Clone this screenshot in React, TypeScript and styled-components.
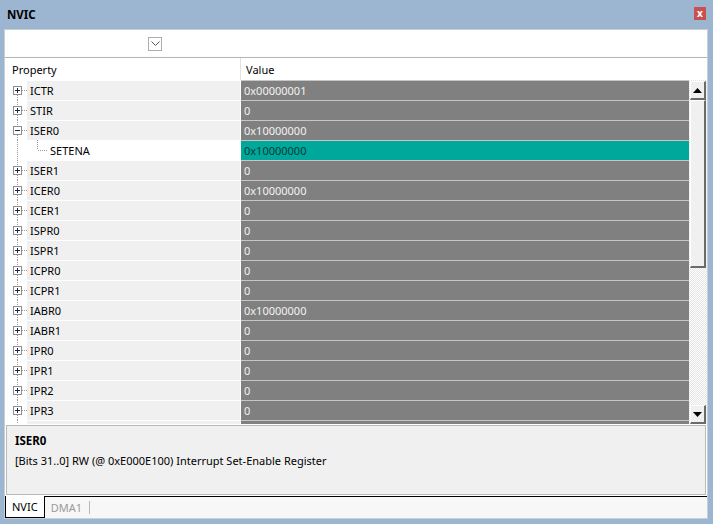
import React from 'react';
import styled, { createGlobalStyle } from 'styled-components';

const GlobalStyle = createGlobalStyle`
  html, body {
    margin: 0;
    padding: 0;
  }
  body {
    font-family: "Noto Sans", "Segoe UI", sans-serif;
    font-size: 11px;
    color: #000;
  }
`;

const Window = styled.div`
  width: 713px;
  height: 524px;
  box-sizing: border-box;
  background: #9cb5d1;
  padding: 0 5px 5px 4px;
  display: flex;
  flex-direction: column;
`;

const TitleBar = styled.div`
  height: 29px;
  flex-shrink: 0;
  display: flex;
  align-items: center;
  justify-content: space-between;
  padding: 0 2px 0 3px;
  font-weight: bold;
  font-size: 11.5px;
`;

const CloseButton = styled.div`
  width: 12px;
  height: 13px;
  background: #c9504f;
  color: #fff;
  font-size: 10px;
  font-weight: bold;
  line-height: 12px;
  text-align: center;
  margin-top: -2px;
`;

const Frame = styled.div`
  flex: 1;
  display: flex;
  flex-direction: column;
  background: #fff;
  border: 1px solid #c9ced4;
  min-height: 0;
`;

const Toolbar = styled.div`
  height: 27px;
  flex-shrink: 0;
  display: flex;
  align-items: center;
  border-bottom: 1px solid #b4b4b4;
`;

const DropButton = styled.div`
  width: 12px;
  height: 12px;
  margin-left: 143px;
  margin-top: 1px;
  border: 1px solid #adadad;
  display: flex;
  align-items: center;
  justify-content: center;
`;

const HeaderRow = styled.div`
  height: 22px;
  flex-shrink: 0;
  display: flex;
  align-items: center;
`;

const HeaderCell = styled.div<{ $width?: number; $divider?: boolean }>`
  ${(p) => (p.$width ? `width: ${p.$width}px;` : 'flex: 1;')}
  height: 100%;
  display: flex;
  align-items: center;
  box-sizing: border-box;
  padding-left: ${(p) => (p.$divider ? 5 : 7)}px;
  ${(p) => p.$divider && 'border-left: 1px solid #e3e3e3;'}
`;

const Grid = styled.div`
  height: 344px;
  flex-shrink: 0;
  display: flex;
`;

const List = styled.div`
  flex: 1;
  overflow: hidden;
`;

const Row = styled.div`
  height: 20px;
  display: flex;
`;

const PropertyCell = styled.div`
  width: 235px;
  height: 20px;
  display: flex;
  background: #fff;
`;

const Label = styled.div<{ $plain?: boolean }>`
  flex: 1;
  margin-top: 1px;
  height: 19px;
  line-height: 19px;
  padding-left: 3px;
  background: ${(p) => (p.$plain ? '#fff' : '#f0f0f0')};
`;

const ValueCell = styled.div<{ $active?: boolean }>`
  flex: 1;
  margin-left: 1px;
  height: 19px;
  line-height: 19px;
  padding-left: 3px;
  border-top: 1px solid #c6c6c6;
  background: ${(p) => (p.$active ? '#00a89b' : '#808080')};
  color: ${(p) => (p.$active ? '#063c37' : '#f2f2f2')};
`;

const Scrollbar = styled.div`
  width: 18px;
  display: flex;
  flex-direction: column;
  box-sizing: border-box;
  padding: 1px 1px 0 1px;
  background-color: #fff;
  background-image: conic-gradient(#ffffff 25%, #e4e4e4 0 50%, #ffffff 0 75%, #e4e4e4 0);
  background-size: 2px 2px;
`;

const ScrollPart = styled.div<{ $height: number }>`
  height: ${(p) => p.$height}px;
  flex-shrink: 0;
  box-sizing: border-box;
  background: #f0f0f0;
  border-top: 1px solid #fff;
  border-left: 1px solid #fff;
  border-right: 2px solid #6b6b6b;
  border-bottom: 2px solid #6b6b6b;
  display: flex;
  align-items: center;
  justify-content: center;
`;

const Track = styled.div`
  flex: 1;
`;

const Details = styled.div`
  height: 70px;
  flex-shrink: 0;
  box-sizing: border-box;
  margin: 1px 1px 0 1px;
  background: #f0f0f0;
  border: 1px solid #b9b9b9;
  padding: 5px 8px;
`;

const DetailTitle = styled.div`
  font-weight: bold;
  font-size: 11.5px;
  line-height: 20px;
`;

const DetailText = styled.div`
  line-height: 20px;
`;

const TabBar = styled.div`
  flex: 1;
  margin-top: 1px;
  display: flex;
  align-items: stretch;
  background: #f7f7f7;
  border-top: 1px solid #000;
`;

const Tab = styled.div<{ $active?: boolean }>`
  display: flex;
  align-items: center;
  padding: 0 6px;
  ${(p) =>
    p.$active
      ? `
    background: #fff;
    margin-top: -1px;
    border-left: 1px solid #000;
    border-right: 1px solid #000;
    border-bottom: 1px solid #000;
    color: #000;
  `
      : `
    color: #9a9a9a;
  `}
`;

const TabDivider = styled.div`
  width: 1px;
  background: #b8b8b8;
  margin: 4px 0 4px 1px;
`;

type Register = {
  name: string;
  value: string;
  expanded?: boolean;
  child?: boolean;
  active?: boolean;
};

const registers: Register[] = [
  { name: 'ICTR', value: '0x00000001' },
  { name: 'STIR', value: '0' },
  { name: 'ISER0', value: '0x10000000', expanded: true },
  { name: 'SETENA', value: '0x10000000', child: true, active: true },
  { name: 'ISER1', value: '0' },
  { name: 'ICER0', value: '0x10000000' },
  { name: 'ICER1', value: '0' },
  { name: 'ISPR0', value: '0' },
  { name: 'ISPR1', value: '0' },
  { name: 'ICPR0', value: '0' },
  { name: 'ICPR1', value: '0' },
  { name: 'IABR0', value: '0x10000000' },
  { name: 'IABR1', value: '0' },
  { name: 'IPR0', value: '0' },
  { name: 'IPR1', value: '0' },
  { name: 'IPR2', value: '0' },
  { name: 'IPR3', value: '0' },
];

const dot = { stroke: '#9a9a9a', strokeWidth: 1, strokeDasharray: '1 1' };

const TreeGutter = ({ reg, first }: { reg?: Register; first: boolean }) => {
  if (reg?.child) {
    return (
      <svg width="42" height="20">
        <line x1="12.5" y1="0" x2="12.5" y2="20" {...dot} />
        <line x1="32.5" y1="0" x2="32.5" y2="10" {...dot} />
        <line x1="33" y1="10.5" x2="43" y2="10.5" {...dot} />
      </svg>
    );
  }
  return (
    <svg width="22" height="20">
      {!first && <line x1="12.5" y1="0" x2="12.5" y2="6" {...dot} />}
      <line x1="12.5" y1="15" x2="12.5" y2="20" {...dot} />
      <line x1="17" y1="10.5" x2="22" y2="10.5" {...dot} />
      <rect x="8.5" y="6.5" width="8" height="8" fill="#fff" stroke="#8e8e8e" />
      <line x1="10" y1="10.5" x2="15" y2="10.5" stroke="#1c2a48" />
      {!reg?.expanded && <line x1="12.5" y1="8" x2="12.5" y2="13" stroke="#1c2a48" />}
    </svg>
  );
};

export default function App() {
  return (
    <>
      <GlobalStyle />
      <Window>
        <TitleBar>
          <span>NVIC</span>
          <CloseButton>x</CloseButton>
        </TitleBar>
        <Frame>
          <Toolbar>
            <DropButton>
              <svg width="9" height="6" viewBox="0 0 9 6">
                <polyline points="0.5,0.5 4.5,4.5 8.5,0.5" fill="none" stroke="#555" />
              </svg>
            </DropButton>
          </Toolbar>
          <HeaderRow>
            <HeaderCell $width={235}>Property</HeaderCell>
            <HeaderCell $divider>Value</HeaderCell>
          </HeaderRow>
          <Grid>
            <List>
              {registers.map((reg, i) => (
                <Row key={reg.name}>
                  <PropertyCell>
                    <TreeGutter reg={reg} first={i === 0} />
                    <Label $plain={reg.child}>{reg.name}</Label>
                  </PropertyCell>
                  <ValueCell $active={reg.active}>{reg.value}</ValueCell>
                </Row>
              ))}
              {/* next row, scrolled mostly out of view */}
              <Row>
                <PropertyCell>
                  <TreeGutter first={false} />
                  <Label />
                </PropertyCell>
                <ValueCell />
              </Row>
            </List>
            <Scrollbar>
              <ScrollPart $height={19}>
                <svg width="9" height="5">
                  <polygon points="0,5 9,5 4.5,0" fill="#000" />
                </svg>
              </ScrollPart>
              <ScrollPart $height={168} />
              <Track />
              <ScrollPart $height={19}>
                <svg width="9" height="5">
                  <polygon points="0,0 9,0 4.5,5" fill="#000" />
                </svg>
              </ScrollPart>
            </Scrollbar>
          </Grid>
          <Details>
            <DetailTitle>ISER0</DetailTitle>
            <DetailText>[Bits 31..0] RW (@ 0xE000E100) Interrupt Set-Enable Register</DetailText>
          </Details>
          <TabBar>
            <Tab $active>NVIC</Tab>
            <Tab>DMA1</Tab>
            <TabDivider />
          </TabBar>
        </Frame>
      </Window>
    </>
  );
}
